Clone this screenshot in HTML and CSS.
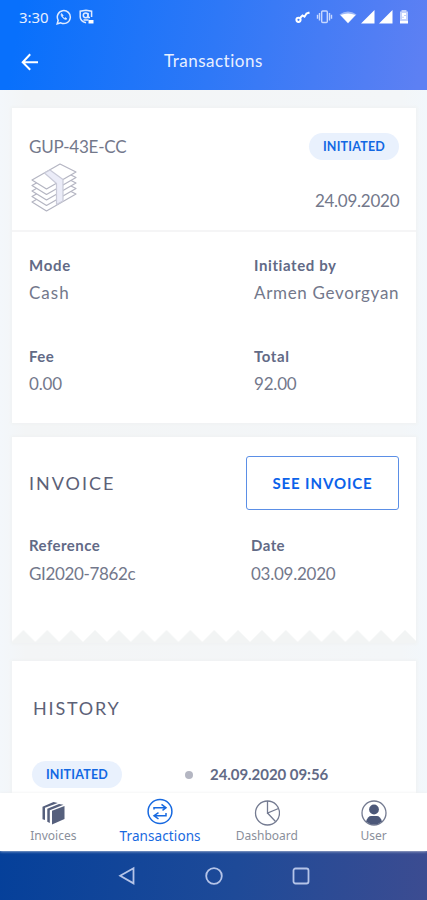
FILE: index.html
```html
<!DOCTYPE html>
<html lang="en">
<head>
<meta charset="utf-8">
<meta name="viewport" content="width=device-width, initial-scale=1">
<title>Transactions</title>
<link rel="stylesheet" href="styles.css">
</head>
<body>
<div class="app">
  <header class="header">
    <div class="status">
      <span class="clock">3:30</span>
      <svg class="whatsapp" width="16" height="16" viewBox="0 0 16 16" fill="none" stroke="#dfeaff" stroke-width="1.5"><path d="M1.2 14.8 2.2 11.3A6.5 6.5 0 1 1 4.8 13.8Z"/><path d="M5.6 4.4c-1 .8-.6 2.4 1 4.200s3.400 2.400 4.400 1.200l-1.600-1.200-1 .7C7.600 8.900 7 8.200 6.600 7.400l.6-.9Z" fill="#dfeaff" stroke-width=".6"/></svg>
      <svg class="shield" width="15" height="16" viewBox="0 0 15 16" fill="none" stroke="#dfeaff" stroke-width="1.500"><path d="M12.600 8V2.200L7 1.200 1.200 2.200V8c0 3 2.500 4.800 5.800 5.800"/><circle cx="6.700" cy="6.300" r="2.400"/><path d="M9 4v4.500h2M4.500 11h5"/><path d="M9.500 11h5v3.500h-5z" fill="#fff" stroke="none"/></svg>
      <div class="status-right">
        <svg width="124" height="18" viewBox="0 0 124 18" fill="#fff">
          <g fill="none" stroke="#fff" stroke-width="2"><circle cx="8.500" cy="11.800" r="2.100"/><path d="M10 10 12.500 7.500l2 1.200L16.500 5.500 19.500 4.500"/></g>
          <g fill="none" stroke="#c7d8ff" stroke-width="1.400"><rect x="31.700" y="3" width="5.600" height="11.500" rx="1"/><path d="M29.500 5v7.500M39.500 5v7.500M27.500 6.800v4M41.500 6.800v4"/></g>
          <path d="M49.500 6.500Q58 .5 66.500 6.500L58 15.500Z" opacity=".45"/><path d="M50.500 7Q58 4 65.500 7L58 15Z"/>
          <path d="M84.500 2v13.500H71zM102.500 2v13.500H89z"/>
          <path d="M111.500 2h5v1.500h1.500v9h-8v-9h1.500z" opacity=".65"/><path d="M110 12.500h8v3h-8zM112 5h4v2h-2v1h2v3h-4V9.700h2v-1h-2z"/>
        </svg>
      </div>
    </div>
    <div class="appbar">
      <svg class="back" width="18" height="18" viewBox="0 0 18 18" fill="none" stroke="#fff" stroke-width="2"><path d="M17 9.200H2M9.200 1.300 1.700 9.200l7.500 7.500"/></svg>
      <h1 class="title">Transactions</h1>
    </div>
  </header>

  <main class="content">
    <section class="card summary">
      <div class="summary-head">
        <div class="summary-left">
          <div class="value code">GUP-43E-CC</div>
          <svg class="cash" width="48" height="50" viewBox="0 0 48 50" fill="#fff" stroke="#b4b5c2" stroke-width="1.200" stroke-linejoin="round">
            <path d="M2 39 16.500 48 46 31 30 23Z"/>
            <path d="M2 33.500 16.500 42.500 46 25.500 30 17.500Z"/>
            <path d="M2 28 16.500 37 46 20 30 12Z"/>
            <path d="M2 22.500 16.500 31.500 46 14.500 30 6.500Z"/>
            <path d="M2 17 16.500 26 46 9 30 1Z"/>
            <path d="M14.500 10 20 7 33 16.500V38L26.500 41.500V20.500Z" fill="#ebecf8" stroke="#c9cad8"/>
          </svg>
        </div>
        <div class="summary-right">
          <span class="pill">INITIATED</span>
          <div class="value date">24.09.2020</div>
        </div>
      </div>
      <div class="grid details">
        <div><div class="label mode">Mode</div><div class="value cashv">Cash</div></div>
        <div><div class="label by">Initiated by</div><div class="value name">Armen Gevorgyan</div></div>
        <div><div class="label">Fee</div><div class="value num">0.00</div></div>
        <div><div class="label total">Total</div><div class="value num">92.00</div></div>
      </div>
    </section>

    <section class="card invoice">
      <div class="invoice-head">
        <h2 class="heading">INVOICE</h2>
        <button class="see">SEE INVOICE</button>
      </div>
      <div class="grid refs">
        <div><div class="label">Reference</div><div class="value refv">GI2020-7862c</div></div>
        <div><div class="label">Date</div><div class="value date">03.09.2020</div></div>
      </div>
      <svg class="zigzag" width="404" height="13" viewBox="0 0 404 13">
        <defs><pattern id="teeth" x="-.500" width="23.850" height="13" patternUnits="userSpaceOnUse"><path d="M0 12 11.925 0 23.850 12V13H0Z" fill="#f2f4f4"/></pattern></defs>
        <rect width="404" height="13" fill="url(#teeth)"/>
      </svg>
    </section>

    <section class="card history">
      <h2 class="heading hist">HISTORY</h2>
      <div class="event">
        <span class="pill">INITIATED</span>
        <span class="dot"></span>
        <span class="stamp">24.09.2020 09:56</span>
      </div>
    </section>
  </main>

  <nav class="tabs">
    <div class="tab">
      <svg width="26" height="28" viewBox="0 0 26 28" fill="#56607d"><path d="M12 12.700 24.500 8v13L12 26.500z"/><path d="M7.300 23.800V10.800L19 6l4.500.7-13.700 5.500v12.800zM2.500 21.200V8.800L13.500 4l4.300.9L5 9.800V22z"/></svg>
      <span class="t1">Invoices</span>
    </div>
    <div class="tab active">
      <svg width="26" height="28" viewBox="0 0 26 28" fill="none" stroke="#1769e0" stroke-width="1.500"><circle cx="13" cy="13.500" r="11.900"/><path d="M7 11.500V9.800h11M14.500 6.300l4.500 3.500-3.500 2.500M19 15v2.700H8M11.500 14.700l-4.500 3 4.500 3.300"/></svg>
      <span class="t2">Transactions</span>
    </div>
    <div class="tab">
      <svg width="26" height="28" viewBox="0 0 26 28" fill="none" stroke="#747b91" stroke-width="1.300"><circle cx="13.500" cy="15" r="12"/><path d="M13.500 3v12l11-4.500M13.500 15l8 8.500"/></svg>
      <span class="t3">Dashboard</span>
    </div>
    <div class="tab">
      <svg width="26" height="28" viewBox="0 0 26 28" fill="#4c5879"><circle cx="13" cy="15" r="12" fill="#fff" stroke="#747b91" stroke-width="1.300"/><circle cx="13" cy="11.500" r="4.900"/><path d="M5 23.500c1-3.500 3-5.500 5-5.500h6c2 0 4 2 5 5.500a12 12 0 0 1-16 0Z"/></svg>
      <span class="t4">User</span>
    </div>
  </nav>

  <div class="sysbar">
    <svg width="18" height="20" viewBox="0 0 18 20"><path d="M15.500 2.200v15.200L2.200 9.800Z"/></svg>
    <svg width="20" height="20" viewBox="0 0 20 20"><circle cx="10" cy="10" r="7.800"/></svg>
    <svg width="18" height="20" viewBox="0 0 18 20"><rect x="1.500" y="2.500" width="15" height="15" rx="2"/></svg>
  </div>
</div>
</body>
</html>
```

FILE: styles.css
```css
* { box-sizing: border-box; margin: 0; }
body { font-family: Lato, "Liberation Sans", sans-serif; background: #f3f6f9; }
.app { width: 427px; height: 900px; display: flex; flex-direction: column; overflow: hidden; }
svg { display: block; flex: none; }

.header { height: 90px; flex: none; background: linear-gradient(100deg, #0870fc 5%, #2e78f7 50%, #5d80f3 98%); color: #fff; }
.status { height: 33px; display: flex; align-items: center; padding-left: 19px; }
.clock { font: 400 15px/20px "Noto Sans", sans-serif; width: 37px; color: #e6efff; letter-spacing: -.1px; }
.shield { margin-left: 7px; }
.status-right { margin: 0 13px 0 auto; }
.appbar { height: 57px; display: flex; align-items: center; padding: 0 0 1px 21px; }
.back { margin-top: 1px; }
.title { font: 400 17px/24px Lato, sans-serif; margin-left: 125px; letter-spacing: .5px; color: #e9f0ff; }

.content { flex: 1; min-height: 0; overflow: hidden; padding: 18px 11px 0 12px; display: flex; flex-direction: column; background: linear-gradient(90deg, #f3f7fb, #f3f5f6 6%, #f3f6f8 94%, #f2f7fb); }
.card { flex: none; background: #fff; box-shadow: 0 0 3px 1px #eff1f2; }
.value { font-size: 17px; line-height: 24px; font-weight: 400; color: #73788b; white-space: nowrap; }
.code { letter-spacing: -.2px; padding-top: 2px; }
.date { letter-spacing: -.25px; margin-right: -.3px; }
.cashv { letter-spacing: 1px; }
.name { letter-spacing: .67px; }
.num { letter-spacing: -.2px; }
.refv { letter-spacing: -.35px; }
.label { font-size: 15px; line-height: 22px; font-weight: 700; letter-spacing: .45px; color: #626a86; white-space: nowrap; margin-bottom: 5px; }
.mode { letter-spacing: .7px; }
.by { letter-spacing: .6px; }
.total { letter-spacing: .6px; }
.heading { font-size: 18px; line-height: 26px; font-weight: 400; letter-spacing: 2px; color: #5c6177; }
.hist { padding-left: 1px; letter-spacing: 1.800px; }
.pill { display: block; width: 90px; height: 27px; border-radius: 14px; background: #e9f1fd; color: #1268e3; font-size: 12.500px; line-height: 27px; font-weight: 700; letter-spacing: .2px; text-align: center; }

.summary { height: 315px; }
.summary-head { height: 124px; border-bottom: 2px solid #f5f5f6; padding: 25px 17px 0 17px; display: flex; justify-content: space-between; }
.cash { margin: 4px 0 0 1px; }
.summary-right { display: flex; flex-direction: column; align-items: flex-end; gap: 29px; }
.grid { display: grid; }
.details { grid-template-columns: 225px 1fr; grid-auto-rows: 91px; padding: 22px 0 0 17px; }

.invoice { height: 206px; margin-top: 14px; display: flex; flex-direction: column; }
.invoice-head { display: flex; justify-content: space-between; align-items: center; padding: 19px 17px 0 17px; }
.see { width: 153px; height: 54px; border: 1.500px solid #5b8fe6; border-radius: 3px; background: #fff; color: #0b62ea; font: 700 15px/20px Lato, sans-serif; letter-spacing: .9px; }
.refs { grid-template-columns: 222px 1fr; padding: 24px 0 0 17px; }
.refs .label { margin-bottom: 6px; }
.zigzag { margin-top: auto; }

.history { height: 200px; margin-top: 18px; padding: 34px 20px; }
.event { display: flex; align-items: center; margin-top: 40px; }
.dot { width: 8px; height: 8px; border-radius: 50%; background: #b4b6c2; margin: 0 17px 0 63px; }
.stamp { font-size: 15px; line-height: 22px; font-weight: 700; color: #626a86; letter-spacing: -.05px; white-space: nowrap; margin-top: -2px; }

.tabs { flex: none; height: 58px; background: #fff; display: grid; grid-template-columns: repeat(4, 1fr); padding-top: 5px; box-shadow: 0 0 3px #eceef0; position: relative; }
.tab { display: flex; flex-direction: column; align-items: center; font: 400 12px/18px "Noto Sans", sans-serif; color: #8a8f9b; }
.tab span { margin-top: 1px; }
.tab.active { color: #1769e0; font-size: 13.500px; letter-spacing: .1px; }

.sysbar { flex: none; height: 49px; display: flex; justify-content: center; align-items: center; gap: 68px; background: linear-gradient(95deg, #05409a, #1e4a98 55%, #3c4c91); fill: none; stroke: #b5c4e8; stroke-width: 1.800; }
```
